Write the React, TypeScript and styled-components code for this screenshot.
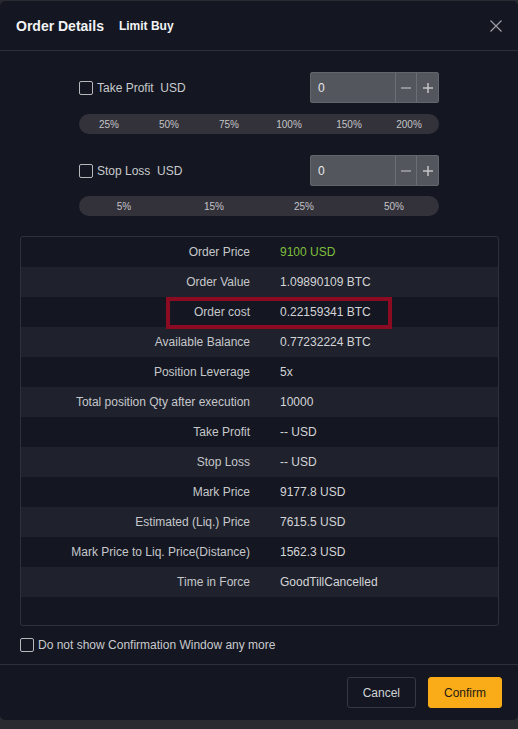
import React from "react";
import styled, { createGlobalStyle } from "styled-components";

const Global = createGlobalStyle`
  html, body { margin: 0; padding: 0; }
  body {
    background: #2a2b30;
    font-family: "Liberation Sans", Arial, sans-serif;
    width: 518px;
    height: 729px;
    overflow: hidden;
  }
  * { box-sizing: border-box; }
`;

const Modal = styled.div`
  margin-top: 1px;
  width: 518px;
  height: 719px;
  background: #141721;
  border-radius: 5px;
  display: flex;
  flex-direction: column;
`;

const Header = styled.div`
  height: 50px;
  border-bottom: 1px solid #2d3039;
  display: flex;
  align-items: center;
  padding: 1px 16px 0 16px;
  gap: 15px;
`;

const Title = styled.div`
  font-size: 14px;
  font-weight: 700;
  color: #f2f3f5;
`;

const SubTitle = styled.div`
  font-size: 12px;
  font-weight: 700;
  color: #f2f3f5;
`;

const Close = styled.button`
  margin-left: auto;
  margin-right: -1px;
  width: 14px;
  height: 14px;
  padding: 0;
  border: 0;
  background: none;
  display: flex;
  align-items: center;
  justify-content: center;
  cursor: pointer;
`;

const Body = styled.div`
  padding-top: 21px;
  display: flex;
  flex-direction: column;
`;

const TPSL = styled.div`
  width: 360px;
  margin: 0 auto;
  display: flex;
  flex-direction: column;
`;

const TPRow = styled.div<{ $mt?: number }>`
  height: 31px;
  display: flex;
  align-items: center;
  margin-top: ${(p) => p.$mt ?? 0}px;
`;

const Check = styled.span`
  width: 14px;
  height: 14px;
  border: 1px solid #b7b8bc;
  border-radius: 2px;
  flex: none;
`;

const Label = styled.span`
  font-size: 12px;
  color: #c9cacd;
  margin-left: 4px;
  white-space: pre;
`;

const Stepper = styled.div`
  margin-left: auto;
  width: 129px;
  height: 31px;
  background: #54565e;
  border: 1px solid #63656c;
  border-radius: 2px;
  display: flex;
  align-items: stretch;
`;

const StepValue = styled.div`
  flex: 1;
  font-size: 12px;
  color: #e6e7e9;
  display: flex;
  align-items: center;
  padding-left: 7px;
`;

const StepBtn = styled.div<{ $w: number }>`
  width: ${(p) => p.$w}px;
  border-left: 1px solid #6c6e75;
  display: flex;
  align-items: center;
  justify-content: center;
`;

const Pill = styled.div<{ $cols: number; $mt: number }>`
  margin-top: ${(p) => p.$mt}px;
  height: 20px;
  border-radius: 10px;
  background: #33323a;
  display: grid;
  grid-template-columns: repeat(${(p) => p.$cols}, 1fr);
  align-items: center;
`;

const PillItem = styled.span`
  font-size: 10px;
  color: #c3c4c8;
  text-align: center;
`;

const Table = styled.div`
  position: relative;
  margin: 20px 19px 0 20px;
  border: 1px solid #2e3139;
  border-radius: 3px;
  padding-bottom: 28px;
`;

const Row = styled.div<{ $alt: boolean }>`
  height: 30px;
  display: grid;
  grid-template-columns: 229px 1fr;
  column-gap: 30px;
  align-items: center;
  background: ${(p) => (p.$alt ? "#1f222c" : "transparent")};
  font-size: 12px;
`;

const Key = styled.span`
  text-align: right;
  color: #c6c7cb;
`;

const Val = styled.span<{ $green?: boolean }>`
  color: ${(p) => (p.$green ? "#7fbf3d" : "#d4d5d8")};
`;

const Highlight = styled.div`
  position: absolute;
  left: 145px;
  top: 60px;
  width: 226px;
  height: 32px;
  border: 4px solid #8a0b22;
  pointer-events: none;
`;

const NoShow = styled.div`
  margin: 12px 0 0 20px;
  height: 14px;
  display: flex;
  align-items: center;
`;

const Footer = styled.div`
  margin-top: 12px;
  border-top: 1px solid #2d3039;
  padding: 12px 16px 0 0;
  display: flex;
  justify-content: flex-end;
  gap: 12px;
`;

const Btn = styled.button<{ $primary?: boolean }>`
  height: 31px;
  padding: 0 15px;
  border-radius: 3px;
  font-family: "Liberation Sans", Arial, sans-serif;
  font-size: 12px;
  cursor: pointer;
  border: 1px solid ${(p) => (p.$primary ? "#f9ac17" : "#363943")};
  background: ${(p) => (p.$primary ? "#f9ac17" : "transparent")};
  color: ${(p) => (p.$primary ? "#1c1a16" : "#d2d3d6")};
`;

const Minus = () => (
  <svg width="10" height="10" viewBox="0 0 10 10">
    <line x1="0" y1="5" x2="10" y2="5" stroke="#a9abb0" strokeWidth="1.4" />
  </svg>
);

const Plus = () => (
  <svg width="10" height="10" viewBox="0 0 10 10">
    <line x1="0" y1="5" x2="10" y2="5" stroke="#c9cacd" strokeWidth="1.4" />
    <line x1="5" y1="0" x2="5" y2="10" stroke="#c9cacd" strokeWidth="1.4" />
  </svg>
);

const rows: [string, string, boolean?][] = [
  ["Order Price", "9100 USD", true],
  ["Order Value", "1.09890109 BTC"],
  ["Order cost", "0.22159341 BTC"],
  ["Available Balance", "0.77232224 BTC"],
  ["Position Leverage", "5x"],
  ["Total position Qty after execution", "10000"],
  ["Take Profit", "-- USD"],
  ["Stop Loss", "-- USD"],
  ["Mark Price", "9177.8 USD"],
  ["Estimated (Liq.) Price", "7615.5 USD"],
  ["Mark Price to Liq. Price(Distance)", "1562.3 USD"],
  ["Time in Force", "GoodTillCancelled"],
];

const Stp = () => (
  <Stepper>
    <StepValue>0</StepValue>
    <StepBtn $w={21}>
      <Minus />
    </StepBtn>
    <StepBtn $w={22}>
      <Plus />
    </StepBtn>
  </Stepper>
);

export default function App() {
  return (
    <>
      <Global />
      <Modal>
        <Header>
          <Title>Order Details</Title>
          <SubTitle>Limit Buy</SubTitle>
          <Close aria-label="close">
            <svg width="12" height="12" viewBox="0 0 12 12">
              <path d="M0.5 0.5 L11.5 11.5 M11.5 0.5 L0.5 11.5" stroke="#9c9ea5" strokeWidth="1.2" />
            </svg>
          </Close>
        </Header>
        <Body>
          <TPSL>
            <TPRow>
              <Check />
              <Label>{"Take Profit  USD"}</Label>
              <Stp />
            </TPRow>
            <Pill $cols={6} $mt={11}>
              {["25%", "50%", "75%", "100%", "150%", "200%"].map((t) => (
                <PillItem key={t}>{t}</PillItem>
              ))}
            </Pill>
            <TPRow $mt={21}>
              <Check />
              <Label>{"Stop Loss  USD"}</Label>
              <Stp />
            </TPRow>
            <Pill $cols={4} $mt={10}>
              {["5%", "15%", "25%", "50%"].map((t) => (
                <PillItem key={t}>{t}</PillItem>
              ))}
            </Pill>
          </TPSL>
          <Table>
            {rows.map(([k, v, g], i) => (
              <Row key={k + i} $alt={i % 2 === 1}>
                <Key>{k}</Key>
                <Val $green={g}>{v}</Val>
              </Row>
            ))}
            <Highlight />
          </Table>
          <NoShow>
            <Check />
            <Label>Do not show Confirmation Window any more</Label>
          </NoShow>
          <Footer>
            <Btn>Cancel</Btn>
            <Btn $primary>Confirm</Btn>
          </Footer>
        </Body>
      </Modal>
    </>
  );
}
